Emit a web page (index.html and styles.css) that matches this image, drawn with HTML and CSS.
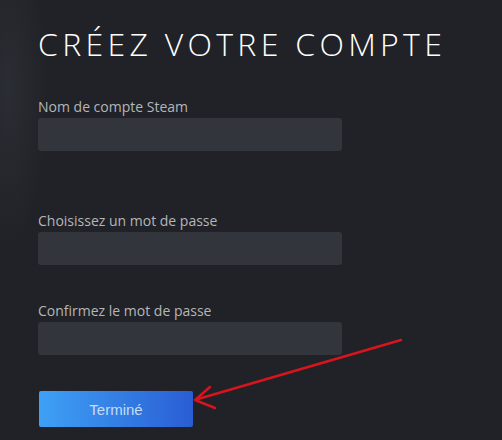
FILE: index.html
```html
<!DOCTYPE html>
<html lang="fr">
<head>
    <meta charset="UTF-8">
    <title>Créez votre compte</title>
    <link rel="stylesheet" href="styles.css">
</head>
<body>
    <div class="page">
        <h1 class="ttl">CRÉEZ VOTRE COMPTE</h1>
        <form class="frm">
            <div class="fld fld1">
                <label class="lbl" for="accountname">Nom de compte Steam</label>
                <input class="ipt" id="accountname" type="text">
            </div>
            <div class="fld fld2">
                <label class="lbl" for="password">Choisissez un mot de passe</label>
                <input class="ipt" id="password" type="password">
            </div>
            <div class="fld fld3">
                <label class="lbl" for="rePassword">Confirmez le mot de passe</label>
                <input class="ipt" id="rePassword" type="password">
            </div>
            <button class="btn" type="button">Terminé</button>
        </form>
        <!-- flèche rouge ajoutée sur la capture -->
        <svg class="arrow" width="502" height="440" viewBox="0 0 502 440">
            <line x1="401" y1="340" x2="198" y2="399" stroke="#d8141c" stroke-width="2.5" stroke-linecap="round"/>
            <polyline points="210,387 195,400 215,408" fill="none" stroke="#d8141c" stroke-width="2.5" stroke-linecap="round" stroke-linejoin="round"/>
        </svg>
    </div>
</body>
</html>
```
FILE: styles.css
```css
html, body {
    margin: 0;
    height: 100%;
}
body {
    background-color: #202227;
    background-image: radial-gradient(ellipse 40px 160px at 8px 90px, #2a2d33 0%, rgba(32, 34, 39, 0) 100%);
    overflow: hidden;
}
.page {
    position: relative;
    height: 440px;
    padding: 0 0 0 38px;
}
.ttl {
    margin: 0;
    padding-top: 24px;
    font-family: "Open Sans", "Liberation Sans", sans-serif;
    font-weight: 300;
    font-size: 32px;
    line-height: 40px;
    letter-spacing: 4.3px;
    color: #ffffff;
}
.frm {
    display: flex;
    flex-direction: column;
    align-items: flex-start;
}
.fld {
    display: flex;
    flex-direction: column;
}
.fld1 {
    margin-top: 34px;
}
.fld2 {
    margin-top: 61px;
}
.fld3 {
    margin-top: 37px;
}
.lbl {
    font-family: "Open Sans", "Liberation Sans", sans-serif;
    font-size: 14px;
    line-height: 18px;
    color: #b4b6b8;
    margin-bottom: 2px;
}
.ipt {
    box-sizing: border-box;
    width: 304px;
    height: 33px;
    border: 0;
    border-radius: 3px;
    background-color: #32353c;
    color: #ffffff;
    outline: none;
}
.btn {
    margin-top: 36px;
    margin-left: 1px;
    width: 154px;
    height: 36px;
    border: 0;
    border-radius: 2px;
    background: linear-gradient(90deg, #3ea1f5 0%, #2a5dd4 100%);
    color: #c4dcf8;
    font-family: "Liberation Sans", Arial, sans-serif;
    font-size: 15px;
}
.arrow {
    position: absolute;
    left: 0;
    top: 0;
    pointer-events: none;
}
```
